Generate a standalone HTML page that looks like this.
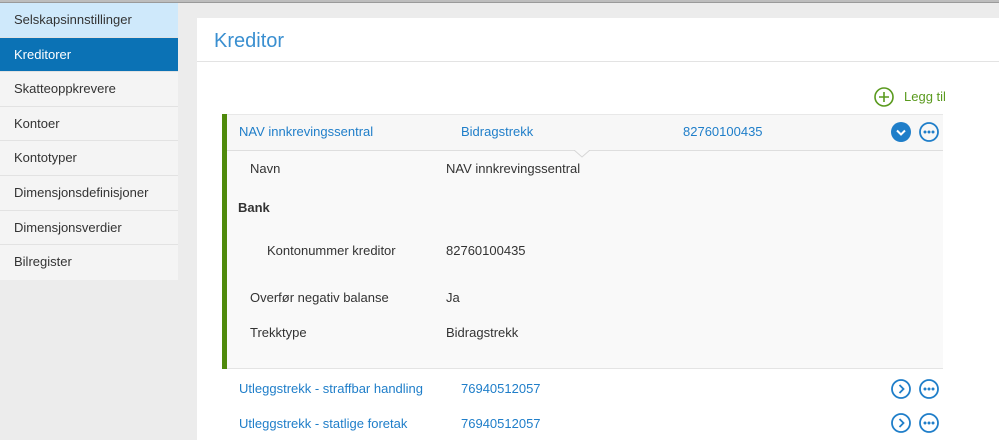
<!DOCTYPE html>
<html><head><meta charset="utf-8"><style>
*{margin:0;padding:0;box-sizing:border-box}
body{width:999px;height:440px;overflow:hidden;background:#ececec;font-family:"Liberation Sans",sans-serif;font-size:13px;color:#333;position:relative}
.top{position:absolute;left:0;top:0;width:999px;height:3px;background:#bdbdbd}
.top2{position:absolute;left:0;top:2px;width:999px;height:1px;background:#9a9a9a}
.side{position:absolute;left:0;top:3px;width:178px;background:#f4f4f4}
.side div{height:34.6px;line-height:34px;padding-left:14px;border-bottom:1px solid #e2e2e2;color:#333}
.side .s0{background:#cfe9fb}
.side .s1{background:#0b72b5;color:#fff}
.card{position:absolute;left:197px;top:18px;width:802px;height:422px;background:#fff}
.h{position:absolute;left:197px;top:18px;width:802px;height:44px;border-bottom:1px solid #e3e3e3}
.h span{position:absolute;left:17px;top:12px;font-size:20px;color:#3a8fd0}
.abs{position:absolute;white-space:nowrap}
.blue{color:#1f7ec9}
</style></head><body>
<div class="top"></div><div class="top2"></div>
<div class="side">
<div class="s0">Selskapsinnstillinger</div>
<div class="s1">Kreditorer</div>
<div>Skatteoppkrevere</div>
<div>Kontoer</div>
<div>Kontotyper</div>
<div>Dimensjonsdefinisjoner</div>
<div>Dimensjonsverdier</div>
<div style="border:none">Bilregister</div>
</div>
<div class="card"></div>
<div class="h"><span>Kreditor</span></div>
<svg class="abs" style="left:873px;top:86px" width="22" height="22"><circle cx="11" cy="11" r="9" fill="none" stroke="#5a9a1e" stroke-width="1.6"/><path d="M11 6v10M6 11h10" stroke="#5a9a1e" stroke-width="1.6"/></svg>
<div class="abs" style="left:904px;top:89px;color:#5a9a1e">Legg til</div>
<div class="abs" style="left:227px;top:114px;width:716px;height:37px;background:#f7f7f7;border-top:1px solid #e8e8e8;border-bottom:1px solid #dedede"></div>
<div class="abs" style="left:227px;top:151px;width:716px;height:218px;background:#f9f9f9;border-bottom:1px solid #e4e4e4"></div>
<div class="abs" style="left:222px;top:114px;width:5px;height:255px;background:#4f8a0b"></div>
<svg class="abs" style="left:574px;top:150px" width="16" height="8"><path d="M0 0L8 7L16 0" fill="#f9f9f9" stroke="#d6d6d6"/></svg>
<div class="abs blue" style="left:239px;top:124px">NAV innkrevingssentral</div>
<div class="abs blue" style="left:461px;top:124px">Bidragstrekk</div>
<div class="abs blue" style="left:683px;top:124px">82760100435</div>
<svg class="abs" style="left:890px;top:121px" width="52" height="22"><circle cx="11" cy="11" r="10" fill="#1f7ec9"/><path d="M7 9.5l4 4 4-4" fill="none" stroke="#fff" stroke-width="2"/><circle cx="39" cy="11" r="9" fill="none" stroke="#1f7ec9" stroke-width="1.8"/><circle cx="35" cy="11" r="1.5" fill="#1f7ec9"/><circle cx="39" cy="11" r="1.5" fill="#1f7ec9"/><circle cx="43" cy="11" r="1.5" fill="#1f7ec9"/></svg>
<div class="abs" style="left:250px;top:161px">Navn</div>
<div class="abs" style="left:446px;top:161px">NAV innkrevingssentral</div>
<div class="abs" style="left:238px;top:200px;font-weight:bold">Bank</div>
<div class="abs" style="left:267px;top:243px">Kontonummer kreditor</div>
<div class="abs" style="left:446px;top:243px">82760100435</div>
<div class="abs" style="left:250px;top:290px">Overfør negativ balanse</div>
<div class="abs" style="left:446px;top:290px">Ja</div>
<div class="abs" style="left:250px;top:325px">Trekktype</div>
<div class="abs" style="left:446px;top:325px">Bidragstrekk</div>
<div class="abs blue" style="left:239px;top:381px">Utleggstrekk - straffbar handling</div>
<div class="abs blue" style="left:461px;top:381px">76940512057</div>
<div class="abs blue" style="left:239px;top:416px">Utleggstrekk - statlige foretak</div>
<div class="abs blue" style="left:461px;top:416px">76940512057</div>
<svg class="abs" style="left:890px;top:378px" width="52" height="22"><circle cx="11" cy="11" r="9" fill="none" stroke="#1f7ec9" stroke-width="1.8"/><path d="M9.5 7l4 4-4 4" fill="none" stroke="#1f7ec9" stroke-width="1.8"/><circle cx="39" cy="11" r="9" fill="none" stroke="#1f7ec9" stroke-width="1.8"/><circle cx="35" cy="11" r="1.5" fill="#1f7ec9"/><circle cx="39" cy="11" r="1.5" fill="#1f7ec9"/><circle cx="43" cy="11" r="1.5" fill="#1f7ec9"/></svg>
<svg class="abs" style="left:890px;top:412px" width="52" height="22"><circle cx="11" cy="11" r="9" fill="none" stroke="#1f7ec9" stroke-width="1.8"/><path d="M9.5 7l4 4-4 4" fill="none" stroke="#1f7ec9" stroke-width="1.8"/><circle cx="39" cy="11" r="9" fill="none" stroke="#1f7ec9" stroke-width="1.8"/><circle cx="35" cy="11" r="1.5" fill="#1f7ec9"/><circle cx="39" cy="11" r="1.5" fill="#1f7ec9"/><circle cx="43" cy="11" r="1.5" fill="#1f7ec9"/></svg>
</body></html>
